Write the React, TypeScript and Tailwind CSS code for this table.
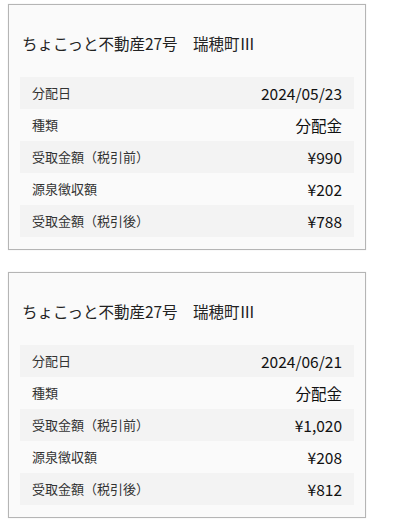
const font = { fontFamily: '"Noto Sans CJK JP", "Noto Sans", sans-serif' };

interface Row {
  label: string;
  value: string;
}

interface Distribution {
  title: string;
  rows: Row[];
}

const items: Distribution[] = [
  {
    title: "ちょこっと不動産27号　瑞穂町Ⅲ",
    rows: [
      { label: "分配日", value: "2024/05/23" },
      { label: "種類", value: "分配金" },
      { label: "受取金額（税引前）", value: "¥990" },
      { label: "源泉徴収額", value: "¥202" },
      { label: "受取金額（税引後）", value: "¥788" },
    ],
  },
  {
    title: "ちょこっと不動産27号　瑞穂町Ⅲ",
    rows: [
      { label: "分配日", value: "2024/06/21" },
      { label: "種類", value: "分配金" },
      { label: "受取金額（税引前）", value: "¥1,020" },
      { label: "源泉徴収額", value: "¥208" },
      { label: "受取金額（税引後）", value: "¥812" },
    ],
  },
];

function Card({ item }: { item: Distribution }) {
  return (
    <div className="w-[358px] border border-[#b5b5b5] bg-[#fafafa] pt-[27px] px-[11px] pb-[12px] shadow-[0_0_1px_rgba(0,0,0,0.15)]">
      <h3 className="ml-[2px] mb-[23px] text-[15.5px] leading-[22px] text-[#222]">{item.title}</h3>
      <div>
        {item.rows.map((row, i) => (
          <div
            key={row.label}
            className={
              "flex h-[32px] items-center justify-between px-3 " +
              (i % 2 === 0 ? "bg-[#f3f3f3]" : "")
            }
          >
            <span className="text-[13px] text-[#333]">{row.label}</span>
            <span className="text-[15.5px] leading-[24px] text-[#111]">{row.value}</span>
          </div>
        ))}
      </div>
    </div>
  );
}

export default function App() {
  return (
    <div className="min-h-screen bg-white pl-2 pt-1" style={font}>
      <div className="flex flex-col gap-[22px]">
        {items.map((item, i) => (
          <Card key={i} item={item} />
        ))}
      </div>
    </div>
  );
}
